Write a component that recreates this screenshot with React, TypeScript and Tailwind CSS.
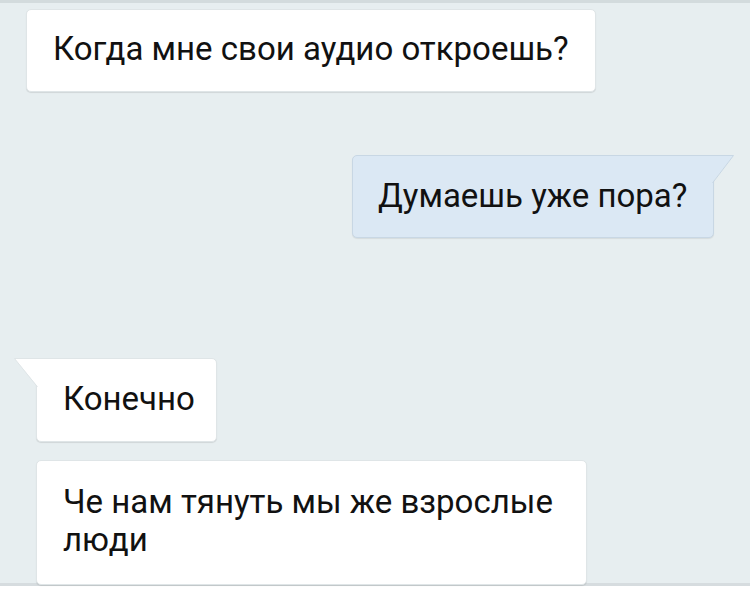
import type { ReactNode } from "react";

const font = { fontFamily: "Roboto, 'Noto Sans', sans-serif" };

function Incoming({ children, tail, className }: { children: ReactNode; tail?: boolean; className: string }) {
  return (
    <div
      className={`relative bg-white border border-[#dfe5e7] shadow-[0_1px_1px_rgba(0,0,0,0.10)] text-[33px] leading-[38px] text-[#111] ${
        tail ? "rounded-[5px] rounded-tl-none" : "rounded-[5px]"
      } ${className}`}
    >
      {tail && (
        <svg className="absolute -left-[23px] -top-px" width="24" height="30" viewBox="0 0 24 30">
          <polygon points="24,0.5 0.5,0.5 24,29" fill="#ffffff" />
          <polyline points="24,0.5 0.5,0.5 23.5,29" fill="none" stroke="#dfe5e7" strokeWidth="1" />
        </svg>
      )}
      {children}
    </div>
  );
}

export default function App() {
  return (
    <div className="w-[750px] h-[591px] overflow-hidden bg-white" style={font}>
      <div className="flex flex-col h-[586px] bg-[#e7eef0] border-t-[3px] border-[#d3dbdd] border-b-[3px] border-b-[#d6dcdf]">
        <Incoming className="mt-[6px] ml-[26px] w-[570px] pl-[26px] pt-[20px] pb-[23px]">
          Когда мне свои аудио откроешь?
        </Incoming>

        <div className="relative self-end mt-[63px] mr-[36px] w-[362px] pl-[25px] pt-[21px] pb-[22px] bg-[#dbe8f4] border border-[#c8d7e4] rounded-[5px] rounded-tr-none shadow-[0_1px_1px_rgba(0,0,0,0.08)] text-[33px] leading-[38px] text-[#111]">
          <svg className="absolute -right-[21px] -top-px" width="22" height="29" viewBox="0 0 22 29">
            <polygon points="0,0.5 21.5,0.5 0,28" fill="#dbe8f4" />
            <polyline points="0,0.5 21.5,0.5 0.5,28" fill="none" stroke="#c8d7e4" strokeWidth="1" />
          </svg>
          Думаешь уже пора?
        </div>

        <Incoming tail className="mt-[120px] ml-[36px] w-[181px] pl-[26px] pt-[21px] pb-[23px]">
          Конечно
        </Incoming>

        <Incoming className="mt-[18px] ml-[36px] w-[551px] pl-[26px] pr-[20px] pt-[22px] pb-[25px]">
          Че нам тянуть мы же взрослые люди
        </Incoming>
      </div>
    </div>
  );
}
